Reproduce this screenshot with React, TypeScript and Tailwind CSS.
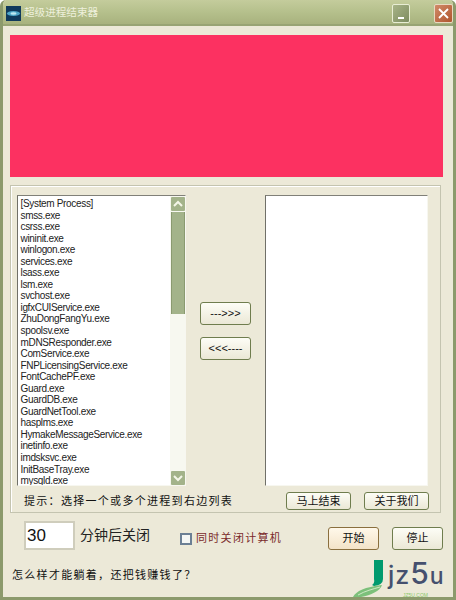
const font = { fontFamily: '"Liberation Sans","Noto Sans CJK SC",sans-serif' };
const procs = ["[System Process]","smss.exe","csrss.exe","wininit.exe","winlogon.exe","services.exe","lsass.exe","lsm.exe","svchost.exe","igfxCUIService.exe","ZhuDongFangYu.exe","spoolsv.exe","mDNSResponder.exe","ComService.exe","FNPLicensingService.exe","FontCachePF.exe","Guard.exe","GuardDB.exe","GuardNetTool.exe","hasplms.exe","HymakeMessageService.exe","inetinfo.exe","imdsksvc.exe","InitBaseTray.exe","mysqld.exe"];

function Btn({ w, h, children, active }: { w: string; h: string; children: React.ReactNode; active?: boolean }) {
  return (
    <div className={`${w} ${h} flex shrink-0 items-center justify-center rounded-[3px] border-[1.5px] ${active ? "border-[#8a6f3e] bg-gradient-to-b from-[#fff8ea] to-[#f3e3c8]" : "border-[#6f7d4e] bg-gradient-to-b from-[#fdfdf6] to-[#ebe8d6]"} text-[11px] leading-none text-[#111]`}>
      {children}
    </div>
  );
}

function Arrow({ up }: { up?: boolean }) {
  return (
    <div className="flex h-[14px] w-[14px] items-center justify-center rounded-[1px] bg-[#a3b38a]">
      <svg width="10" height="8" viewBox="0 0 10 8"><path d={up ? "M1 6 L5 2 L9 6" : "M1 2 L5 6 L9 2"} fill="none" stroke="#f4f6e8" strokeWidth="2" /></svg>
    </div>
  );
}

export default function App() {
  return (
    <div style={font} className="relative flex h-[600px] w-[456px] flex-col overflow-hidden rounded-t-[6px] border-x-[3px] border-b-[3px] border-[#8c9a6c] bg-[#ece9d8] text-[#111]">
      <div className="flex h-[26px] shrink-0 items-center border-b-2 border-[#98a474] bg-gradient-to-b from-[#c4cc9c] via-[#b5c08c] to-[#a8b27e] pl-[3px] pr-0 pt-[2px]">
        <svg width="15" height="15" viewBox="0 0 15 15">
          <rect width="15" height="15" fill="#10395c" />
          <ellipse cx="7.5" cy="7.5" rx="6.5" ry="2.6" fill="#4fa6c8" />
          <ellipse cx="7.5" cy="7.5" rx="3" ry="1.2" fill="#bfe8f2" />
        </svg>
        <span className="ml-[3px] text-[10.6px] text-[#eef0dc]">超级进程结束器</span>
        <div className="ml-auto mr-[24px] flex h-[19px] w-[18px] items-end justify-center rounded-[2px] border border-[#e8edd4] bg-gradient-to-br from-[#a8b488] to-[#7e8c60] pb-[3px]">
          <div className="h-[2px] w-[6px] bg-white" />
        </div>
        <div className="flex h-[19px] w-[19px] items-center justify-center rounded-[2px] border border-[#e8d8c0] bg-gradient-to-br from-[#d08a68] to-[#b0542c]">
          <svg width="13" height="13" viewBox="0 0 13 13"><path d="M2 2 L11 11 M11 2 L2 11" stroke="#fff" strokeWidth="1.8" /></svg>
        </div>
      </div>

      <div className="flex min-h-0 flex-1 flex-col bg-[#ece9d8] pl-[7px] pr-[10px] pt-[9px]">
        <div className="h-[142px] w-[433px] shrink-0 bg-[#fc3161]" />

        <div className="mt-[8px] h-[328px] w-[431px] shrink-0 border border-[#c4c4b0] pl-[6px] pr-[11px] pt-[9px] shadow-[inset_1px_1px_0_#fff]">
          <div className="flex items-stretch">
            <div className="flex h-[291px] w-[169px] shrink-0 border-[1.5px] border-b-[#f7f7f0] border-l-[#707068] border-r-[#f7f7f0] border-t-[#808078] bg-white">
              <div className="min-w-0 flex-1 overflow-hidden pl-[2.5px] pt-[2px] text-[10px] leading-[11.55px] tracking-[-0.33px] text-[#222]">
                {procs.map((p) => <div key={p}>{p}</div>)}
              </div>
              <div className="flex w-[15px] shrink-0 flex-col items-center bg-[#f7f8f0] pt-[1px]">
                <Arrow up />
                <div className="mt-[1px] h-[102px] w-[14px] border-x border-[#8a9a70] bg-[#a3b38a]" />
                <div className="flex-1" />
                <Arrow />
              </div>
            </div>
            <div className="flex w-[79px] shrink-0 flex-col items-center pt-[107px]">
              <Btn w="w-[51px]" h="h-[23px]">---&gt;&gt;&gt;</Btn>
              <div className="h-[12px]" />
              <Btn w="w-[51px]" h="h-[23px]">&lt;&lt;&lt;----</Btn>
            </div>
            <div className="h-[291px] w-[163px] shrink-0 border-[1.5px] border-b-[#f7f7f0] border-l-[#707068] border-r-[#f7f7f0] border-t-[#808078] bg-white" />
          </div>
          <div className="mt-[6px] flex items-center">
            <span className="ml-[7px] text-[11px] tracking-[1.3px] text-[#111]">提示：选择一个或多个进程到右边列表</span>
            <div className="ml-auto flex gap-[13px]">
              <Btn w="w-[65px]" h="h-[18px]">马上结束</Btn>
              <Btn w="w-[65px]" h="h-[18px]">关于我们</Btn>
            </div>
          </div>
        </div>

        <div className="mt-[8px] flex items-center whitespace-nowrap">
          <div className="ml-[14px] flex h-[29px] w-[51px] shrink-0 items-center border-2 border-[#cfcdbc] bg-white pl-[1px] text-[17px] text-[#111]">30</div>
          <span className="ml-[5px] shrink-0 text-[14px] text-[#222]">分钟后关闭</span>
          <div className="ml-[30px] mt-[6px] h-[12px] w-[12px] shrink-0 border-2 border-[#6b7f94] bg-[#f4f6f4]" />
          <span className="ml-[4px] mt-[6px] shrink-0 text-[11px] tracking-[1.3px] text-[#7a2a2a]">同时关闭计算机</span>
          <div className="ml-auto mt-[6px] flex shrink-0 gap-[13px]">
            <Btn w="w-[51px]" h="h-[23px]" active>开始</Btn>
            <Btn w="w-[51px]" h="h-[23px]">停止</Btn>
          </div>
        </div>

        <div className="ml-[2px] mt-[17px] text-[11px] tracking-[1.3px] text-[#111]">怎么样才能躺着，还把钱赚钱了？</div>
      </div>

      <div className="absolute bottom-0 right-0 h-[40px] w-[100px]">
        <svg width="34" height="40" viewBox="0 0 34 40" className="absolute left-0 top-0">
          <path d="M21 3 H30 V22 Q30 28 21 29 L19 28 Q22 26 21 22 Z" fill="#009a6e" />
          <path d="M0 40 C3 34 12 30 29 28 C27 34 18 38 8 40 Z" fill="#7cc07a" />
          <path d="M5 38 C12 34 20 32 27 30" fill="none" stroke="#e4f2d8" strokeWidth="0.8" />
        </svg>
        <div style={{ fontFamily: 'Inter,sans-serif' }} className="absolute left-[35px] top-0 flex h-[32px] items-baseline font-medium leading-[32px] text-[#45506e]">
          <span className="text-[25px] tracking-[1px]">jz</span>
          <span className="text-[30px]">5</span>
          <span className="ml-[1px] text-[23px]">u</span>
        </div>
        <span className="absolute left-[50px] top-[36px] whitespace-nowrap text-[5px] leading-[4px] text-[#8ac76a]">JZ5U.COM</span>
      </div>
    </div>
  );
}
